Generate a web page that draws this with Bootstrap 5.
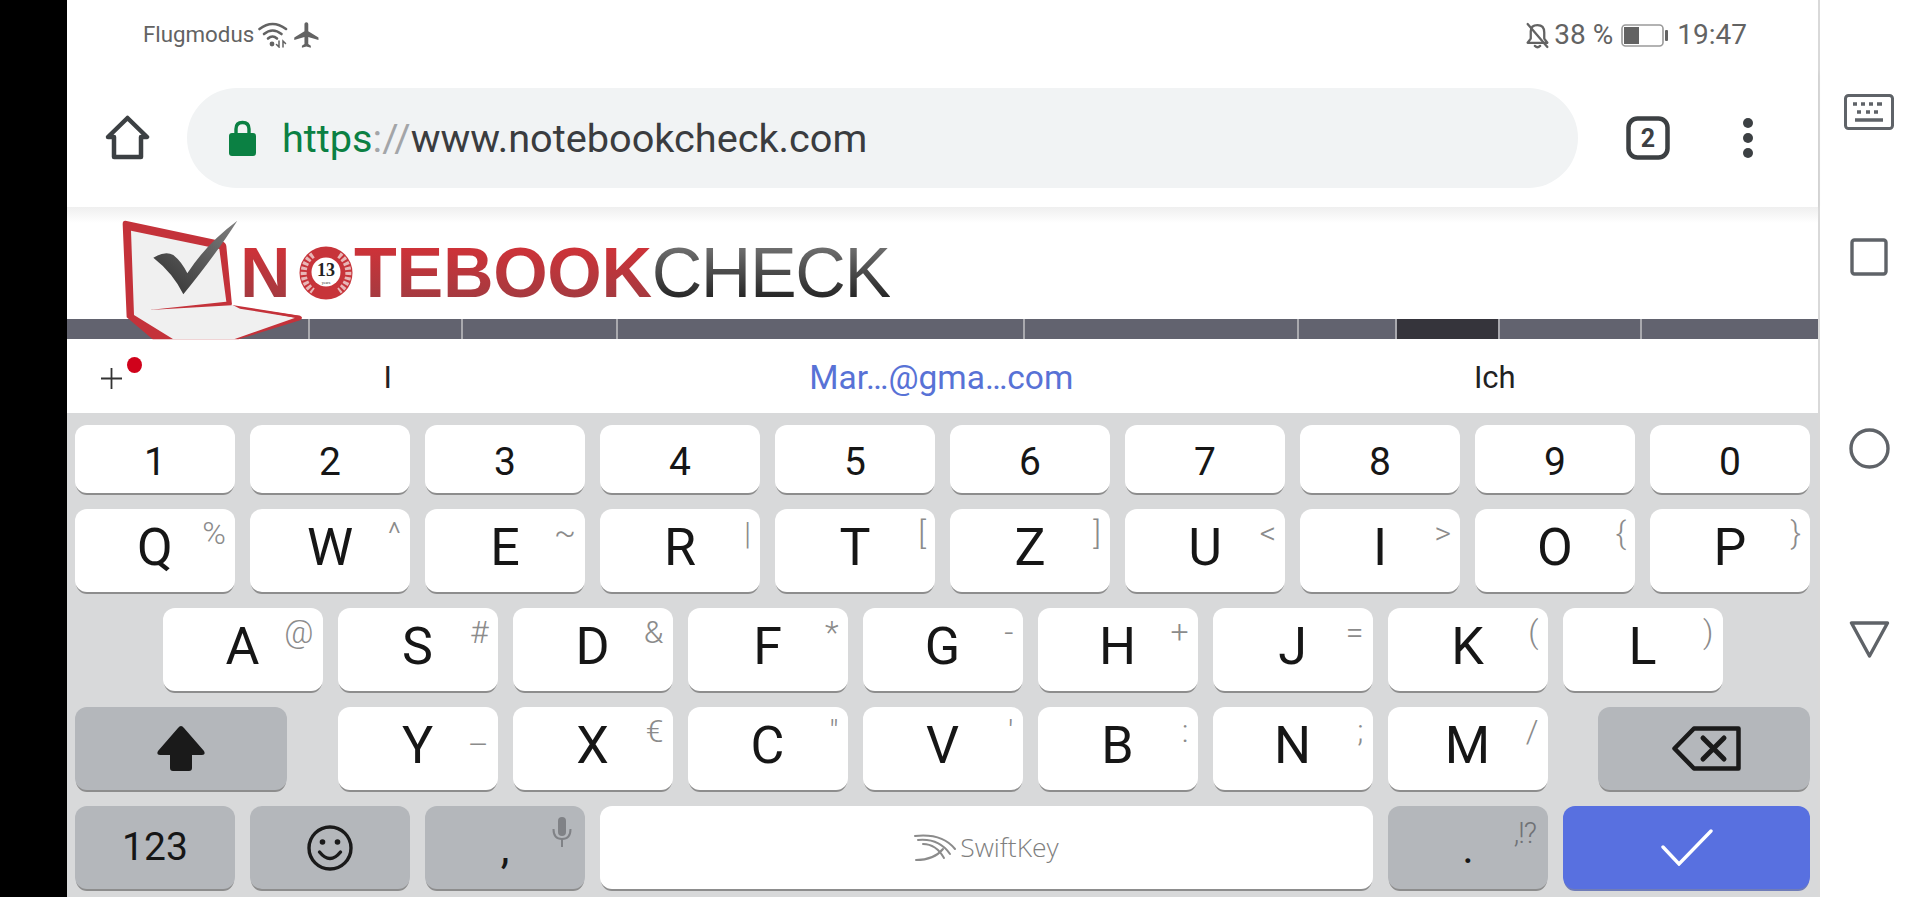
<!DOCTYPE html>
<html lang="en">
<head>
    <meta charset="UTF-8" />
    <title>Notebookcheck - SwiftKey</title>
    <meta name="viewport" content="width=device-width, initial-scale=1" />
    <link href="https://cdn.jsdelivr.net/npm/bootstrap@5.3.2/dist/css/bootstrap.min.css" rel="stylesheet" />
    <style>
        html, body { height: 100%; overflow: hidden; }
        body { background: #000; font-family: Roboto, "Liberation Sans", sans-serif; }

        .phone-frame { width: 1920px; height: 897px; }
        .black-edge { width: 67px; background: #000; }
        .phone-main { width: 1753px; border-right: 2px solid #d9d9d9; background: #fff; }
        .nav-side { width: 100px; background: #fff; padding: 94px 2px 0 0; }
        .nav-side svg { display: block; }
        .nav-kbd { margin-bottom: 108px; }
        .nav-square { margin-bottom: 152px; }
        .nav-circle { margin-bottom: 152px; }

        .status-row { height: 68px; padding: 2px 71px 0 76px; color: #636363; }
        .status-left { font-size: 22.3px; }
        .status-right { font-size: 28px; }

        .tool-row { height: 139px; padding-left: 38px; box-shadow: 0 3px 4px -2px rgba(0,0,0,.25); position: relative; }
        .url-pill { width: 1391px; height: 100px; margin: 0 48px 0 37px; padding: 3px 0 0 42px; background: #f1f3f4; border-radius: 50px; font-size: 39.7px; color: #3a3c3f; }
        .url-green { color: #0b8043; }
        .url-slash { color: #a3a5a8; }
        .url-lock { margin: -3px 26px 0 0; }
        .tab-dots { margin-left: 72px; }

        .web-area { height: 133px; background: linear-gradient(#efefef, #fff 16px); }
        .logo-word { padding: 31px 0 0 173px; height: 112px; font-family: "Liberation Sans", Arial, sans-serif; font-size: 70px; line-height: 1; }
        .logo-red { font-weight: 700; height: 70px; background: linear-gradient(#cf3238 12%, #a53a40 85%); -webkit-background-clip: text; background-clip: text; color: transparent; }
        .logo-red-tail { letter-spacing: -.3px; }
        .logo-grey { letter-spacing: -1.4px; height: 70px; background: linear-gradient(#707070 12%, #262626 85%); -webkit-background-clip: text; background-clip: text; color: transparent; }
        .logo-laptop { position: absolute; left: 43px; top: 3px; }
        .logo-badge { margin: 8px 1px 0 8.5px; }

        .site-bar { height: 20px; background: #62636f; }
        .seg { border-right: 2px solid #a9a9ae; height: 100%; }
        .seg-a { width: 243px; } .seg-b { width: 153px; } .seg-c { width: 155px; } .seg-d { width: 407px; }
        .seg-e { width: 274px; } .seg-f { width: 98px; } .seg-g { width: 103px; background: #35343b; } .seg-h { width: 142px; }
        .seg-i { flex-grow: 1; border-right: 0; }

        .suggest-strip { height: 73px; padding: 4px 0 0 34px; font-size: 31px; color: #222; }
        .suggest-plus { width: 10px; height: 21px; }
        .suggest-dot { position: absolute; left: 26px; top: -11px; width: 15px; height: 16px; border-radius: 50%; background: #d0021b; }
        .suggest-item { width: 553.5px; text-align: center; }
        .suggest-mail { color: #5872d6; font-size: 33.5px; }

        .kb-area { height: 484px; background: #d8d9da; padding: 12px 8px 0 8px; }
        .kb-line { height: 83px; gap: 15px; }
        .kb-line-digits { height: 68px; }
        .kb-key { width: 160px; height: 100%; position: relative; background: #fff; border-radius: 12px; box-shadow: 0 3px 0 -1px #8d8d8d; font-size: 52px; color: #161616; padding-bottom: 6px; line-height: 1; }
        .kb-key sup { position: absolute; top: 8px; right: 9px; font-size: 32px; font-weight: 300; line-height: 1; color: #8b8b8b; }
        .kb-key sup.sup-low { top: 22px; }
        .kb-digit { font-size: 39px; padding-bottom: 0; padding-top: 7px; }
        .kb-dark { background: #b4b7bb; }
        .kb-wide { width: 212px; }
        .kb-space { width: 773px; padding: 0; font-size: 26.5px; font-family: "Open Sans", sans-serif; font-weight: 300; color: #7f7f7f; gap: 4px; }
        .kb-enter { width: 247px; padding: 0; background: #5870e0; box-shadow: 0 3px 0 -1px #6f7cb8; }
        .kb-num { width: 160px; font-size: 39px; padding: 0; }
        .kb-comma { font-size: 44px; }
        .kb-mic { position: absolute; top: 11px; right: 13px; }
        .kb-punct { position: absolute; top: 13px; right: 12px; font-size: 29px; font-weight: 300; color: #707276; letter-spacing: -1px; line-height: 1; }
        .kb-back-icon { margin-left: 4px; }
    </style>
</head>
<body>
<div class="phone-frame d-flex">
    <div class="black-edge"></div>

    <div class="phone-main d-flex flex-column">
        <!-- status bar -->
        <div class="status-row d-flex align-items-center justify-content-between">
            <div class="status-left d-flex align-items-center">
                <span>Flugmodus</span>
                <svg class="ms-1" width="31" height="26" viewBox="0 0 31 26" fill="none" stroke="#636363" stroke-width="2.6" stroke-linecap="round">
                    <path d="M1.5 7 Q14.5 -3 28 7" />
                    <path d="M6 12 Q14.5 5 23.5 12" />
                    <path d="M10 16.5 Q14.5 12.5 19 16.5" />
                    <circle cx="14" cy="22" r="2.4" fill="#636363" stroke="none" />
                    <path d="M21 19v6l-2.5-2.5M25 25v-6l2.5 2.5" stroke-width="1.5" />
                </svg>
                <svg class="ms-1" width="28" height="28" viewBox="1 1 22 22" fill="#636363"><path d="M21 16v-2l-8-5V3.5c0-.83-.67-1.5-1.5-1.5S10 2.67 10 3.5V9l-8 5v2l8-2.5V19l-2 1.5V22l3.5-1 3.5 1v-1.5L13 19v-5.5l8 2.5z" /></svg>
            </div>
            <div class="status-right d-flex align-items-center">
                <svg class="me-1" width="25" height="27" viewBox="0 0 23 26" fill="none" stroke="#636363" stroke-width="2.2" stroke-linecap="round" stroke-linejoin="round">
                    <path d="M5 9 Q5 3 11.5 3 Q18 3 18 10 V16 L21 20 H2 L5 16 Z" />
                    <path d="M9 23 Q11.5 25.5 14 23" />
                    <path d="M2 2 L21 24" />
                </svg>
                <span>38 %</span>
                <svg class="mx-2" width="48" height="23" viewBox="0 0 48 23">
                    <rect x="1" y="1" width="41" height="21" rx="3.5" fill="#fff" stroke="#9a9a9a" stroke-width="1.6" />
                    <rect x="3" y="3" width="15" height="17" fill="#636363" />
                    <rect x="44" y="6" width="3" height="11" rx="1" fill="#636363" />
                </svg>
                <span>19:47</span>
            </div>
        </div>

        <!-- browser toolbar -->
        <div class="tool-row d-flex align-items-center">
            <svg width="45" height="45" viewBox="0 0 45 45" fill="none" stroke="#3c4043" stroke-width="4.5" stroke-linejoin="round">
                <path d="M22.5 3 L42 22 H36 V42 H9 V22 H3 Z" />
            </svg>
            <div class="url-pill d-flex align-items-center">
                <svg class="url-lock" width="27" height="36" viewBox="0 0 27 36">
                    <path d="M7 15 V9 Q7 2.5 13.5 2.5 Q20 2.5 20 9 V15" fill="none" stroke="#0b8043" stroke-width="3.4" />
                    <rect x="0" y="13" width="27" height="23" rx="3" fill="#0b8043" />
                </svg>
                <span><span class="url-green">https</span><span class="url-slash">://</span>www.notebookcheck.com</span>
            </div>
            <svg width="44" height="44" viewBox="0 0 44 44">
                <rect x="2.5" y="2.5" width="39" height="39" rx="9" fill="none" stroke="#3c4043" stroke-width="4.5" />
                <text x="22" y="31" text-anchor="middle" font-family="Roboto, sans-serif" font-size="25" font-weight="700" fill="#3c4043">2</text>
            </svg>
            <svg class="tab-dots" width="12" height="42" viewBox="0 0 12 42" fill="#3c4043">
                <circle cx="6" cy="6" r="5" /><circle cx="6" cy="21" r="5" /><circle cx="6" cy="36" r="5" />
            </svg>
        </div>

        <!-- page behind the keyboard -->
        <div class="web-area position-relative">
            <div class="logo-word d-flex align-items-start">
                <span class="logo-red">N</span>
                <svg class="logo-badge" width="54" height="54" viewBox="0 0 54 54">
                    <circle cx="27" cy="27" r="26.5" fill="#c7343a" />
                    <path d="M14 9 A22 22 0 0 0 14 45 M40 9 A22 22 0 0 1 40 45" fill="none" stroke="#e8b7b7" stroke-width="6" stroke-dasharray="3 2" />
                    <circle cx="27" cy="26" r="14.5" fill="#fff" />
                    <text x="27" y="30" text-anchor="middle" font-family="Liberation Serif, serif" font-weight="700" font-size="18" fill="#222">13</text>
                    <text x="27" y="38" text-anchor="middle" font-family="Liberation Serif, serif" font-size="4" fill="#222">years</text>
                </svg>
                <span class="logo-red logo-red-tail">TEBOOK</span><span class="logo-grey">CHECK</span>
            </div>
            <div class="site-bar d-flex">
                <div class="seg seg-a"></div><div class="seg seg-b"></div><div class="seg seg-c"></div><div class="seg seg-d"></div>
                <div class="seg seg-e"></div><div class="seg seg-f"></div><div class="seg seg-g"></div><div class="seg seg-h"></div><div class="seg seg-i"></div>
            </div>
            <svg class="logo-laptop" width="200" height="130" viewBox="0 0 600 390">
                <defs>
                    <linearGradient id="chk" x1="0" y1="1" x2="1" y2="0">
                        <stop offset="0" stop-color="#2f2f2f" /><stop offset="1" stop-color="#808080" />
                    </linearGradient>
                </defs>
                <path d="M38 42 Q38 30 50 33 L336 94 Q347 97 349 108 L366 285 L570 317 Q582 322 570 331 L385 388 H128 L50 322 Z" fill="#c4323a" />
                <path d="M63 62 L328 117 L349 275 L390 296 L556 323 L372 388 H190 L72 315 Z" fill="#f0f0f0" />
                <path d="M118 300 L362 274 L365 286 Z M395 292 L572 318 L560 324 Z" fill="#c4323a" />
                <path d="M130 143 Q165 122 190 135 Q215 155 232 190 Q290 100 382 32 Q320 130 220 253 Q190 190 130 143 Z" fill="url(#chk)" />
            </svg>
        </div>

        <!-- suggestion strip -->
        <div class="suggest-strip d-flex align-items-center bg-white">
            <div class="suggest-plus position-relative">
                <svg class="d-block" width="21" height="21" viewBox="0 0 21 21" stroke="#333" stroke-width="1.8"><path d="M0 10.5H21M10.5 0V21" /></svg>
                <span class="suggest-dot"></span>
            </div>
            <div class="suggest-item">I</div>
            <div class="suggest-item suggest-mail">Mar…@gma…com</div>
            <div class="suggest-item">Ich</div>
        </div>

        <!-- keyboard -->
        <div class="kb-area d-flex flex-column gap-3">
            <div class="kb-line kb-line-digits d-flex">
                <div class="kb-key kb-digit d-flex align-items-center justify-content-center">1</div>
                <div class="kb-key kb-digit d-flex align-items-center justify-content-center">2</div>
                <div class="kb-key kb-digit d-flex align-items-center justify-content-center">3</div>
                <div class="kb-key kb-digit d-flex align-items-center justify-content-center">4</div>
                <div class="kb-key kb-digit d-flex align-items-center justify-content-center">5</div>
                <div class="kb-key kb-digit d-flex align-items-center justify-content-center">6</div>
                <div class="kb-key kb-digit d-flex align-items-center justify-content-center">7</div>
                <div class="kb-key kb-digit d-flex align-items-center justify-content-center">8</div>
                <div class="kb-key kb-digit d-flex align-items-center justify-content-center">9</div>
                <div class="kb-key kb-digit d-flex align-items-center justify-content-center">0</div>
            </div>
            <div class="kb-line d-flex">
                <div class="kb-key d-flex align-items-center justify-content-center">Q<sup>%</sup></div>
                <div class="kb-key d-flex align-items-center justify-content-center">W<sup>^</sup></div>
                <div class="kb-key d-flex align-items-center justify-content-center">E<sup>~</sup></div>
                <div class="kb-key d-flex align-items-center justify-content-center">R<sup>|</sup></div>
                <div class="kb-key d-flex align-items-center justify-content-center">T<sup>[</sup></div>
                <div class="kb-key d-flex align-items-center justify-content-center">Z<sup>]</sup></div>
                <div class="kb-key d-flex align-items-center justify-content-center">U<sup>&lt;</sup></div>
                <div class="kb-key d-flex align-items-center justify-content-center">I<sup>&gt;</sup></div>
                <div class="kb-key d-flex align-items-center justify-content-center">O<sup>{</sup></div>
                <div class="kb-key d-flex align-items-center justify-content-center">P<sup>}</sup></div>
            </div>
            <div class="kb-line d-flex justify-content-center">
                <div class="kb-key d-flex align-items-center justify-content-center">A<sup>@</sup></div>
                <div class="kb-key d-flex align-items-center justify-content-center">S<sup>#</sup></div>
                <div class="kb-key d-flex align-items-center justify-content-center">D<sup>&amp;</sup></div>
                <div class="kb-key d-flex align-items-center justify-content-center">F<sup>*</sup></div>
                <div class="kb-key d-flex align-items-center justify-content-center">G<sup>-</sup></div>
                <div class="kb-key d-flex align-items-center justify-content-center">H<sup>+</sup></div>
                <div class="kb-key d-flex align-items-center justify-content-center">J<sup>=</sup></div>
                <div class="kb-key d-flex align-items-center justify-content-center">K<sup>(</sup></div>
                <div class="kb-key d-flex align-items-center justify-content-center">L<sup>)</sup></div>
            </div>
            <div class="kb-line d-flex justify-content-between">
                <div class="kb-key kb-dark kb-wide d-flex align-items-center justify-content-center p-0">
                    <svg width="48" height="45" viewBox="0 0 48 45" fill="#1a1a1a"><path d="M24 0 Q25.5 0 27 2 L47 25 Q49 29 45 29 H35 V42 Q35 45 32 45 H16 Q13 45 13 42 V29 H3 Q-1 29 1 25 L21 2 Q22.5 0 24 0 Z" /></svg>
                </div>
                <div class="kb-line d-flex">
                    <div class="kb-key d-flex align-items-center justify-content-center">Y<sup class="sup-low">–</sup></div>
                    <div class="kb-key d-flex align-items-center justify-content-center">X<sup>€</sup></div>
                    <div class="kb-key d-flex align-items-center justify-content-center">C<sup>"</sup></div>
                    <div class="kb-key d-flex align-items-center justify-content-center">V<sup>'</sup></div>
                    <div class="kb-key d-flex align-items-center justify-content-center">B<sup>:</sup></div>
                    <div class="kb-key d-flex align-items-center justify-content-center">N<sup>;</sup></div>
                    <div class="kb-key d-flex align-items-center justify-content-center">M<sup>/</sup></div>
                </div>
                <div class="kb-key kb-dark kb-wide d-flex align-items-center justify-content-center p-0">
                    <svg class="kb-back-icon" width="69" height="45" viewBox="0 0 69 45" fill="none" stroke="#1a1a1a" stroke-width="4.5" stroke-linejoin="round" stroke-linecap="round">
                        <path d="M22 2.5 H66.5 V42.5 H22 L2.5 22.5 Z" />
                        <path d="M31 12 L52 33 M52 12 L31 33" stroke-width="5" />
                    </svg>
                </div>
            </div>
            <div class="kb-line d-flex">
                <div class="kb-key kb-dark kb-num d-flex align-items-center justify-content-center">123</div>
                <div class="kb-key kb-dark kb-num d-flex align-items-center justify-content-center">
                    <svg width="46" height="46" viewBox="0 0 46 46" fill="none" stroke="#1a1a1a" stroke-width="3.4" stroke-linecap="round">
                        <circle cx="23" cy="23" r="21" />
                        <circle cx="15.5" cy="17" r="2.8" fill="#1a1a1a" stroke="none" />
                        <circle cx="30.5" cy="17" r="2.8" fill="#1a1a1a" stroke="none" />
                        <path d="M12.5 27 Q23 40 33.5 27" />
                    </svg>
                </div>
                <div class="kb-key kb-dark kb-num kb-comma d-flex align-items-center justify-content-center">,
                    <svg class="kb-mic" width="20" height="30" viewBox="0 0 20 30" fill="#808286">
                        <rect x="6" y="0" width="8" height="19" rx="4" />
                        <path d="M1.5 12 Q1.5 22 10 22 Q18.5 22 18.5 12" fill="none" stroke="#808286" stroke-width="2" />
                        <rect x="9" y="21" width="2" height="9" />
                    </svg>
                </div>
                <div class="kb-key kb-space d-flex align-items-center justify-content-center">
                    <svg width="42" height="28" viewBox="0 0 42 28" fill="none" stroke="#8b8b8b" stroke-width="2" stroke-linecap="round">
                        <path d="M1 2 Q28 -1 41 15" /><path d="M4 6 Q25 4 36 20" /><path d="M9 10 Q22 10 30 24" /><path d="M2 26 Q20 26 29 15" />
                    </svg>
                    <span>SwiftKey</span>
                </div>
                <div class="kb-key kb-dark kb-num kb-comma d-flex align-items-center justify-content-center">.
                    <span class="kb-punct">,!?</span>
                </div>
                <div class="kb-key kb-enter d-flex align-items-center justify-content-center">
                    <svg width="52" height="37" viewBox="0 0 52 37" fill="none" stroke="#fff" stroke-width="3.4" stroke-linecap="round"><path d="M2 18 L18 35 L50 2" /></svg>
                </div>
            </div>
        </div>
    </div>

    <!-- android nav -->
    <div class="nav-side d-flex flex-column align-items-center">
        <svg class="nav-kbd" width="50" height="36" viewBox="0 0 50 36" fill="none" stroke="#5f6368" stroke-width="3">
            <rect x="1.5" y="1.5" width="47" height="33" rx="3" />
            <path d="M9 10h4M17 10h4M25 10h4M33 10h5M13 18h4M22 18h4M30 18h4M11 26h28" stroke-width="3.4" />
        </svg>
        <svg class="nav-square" width="38" height="38" viewBox="0 0 38 38" fill="none" stroke="#5f6368" stroke-width="3.4"><rect x="2" y="2" width="34" height="34" rx="2.5" /></svg>
        <svg class="nav-circle" width="41" height="41" viewBox="0 0 41 41" fill="none" stroke="#5f6368" stroke-width="3.4"><circle cx="20.5" cy="20.5" r="18.5" /></svg>
        <svg width="41" height="37" viewBox="0 0 41 37" fill="none" stroke="#5f6368" stroke-width="3.4" stroke-linejoin="round"><path d="M2.5 2 H38.5 L20.5 35 Z" /></svg>
    </div>
</div>
<script src="https://cdn.jsdelivr.net/npm/bootstrap@5.3.2/dist/js/bootstrap.bundle.min.js"></script>
</body>
</html>
